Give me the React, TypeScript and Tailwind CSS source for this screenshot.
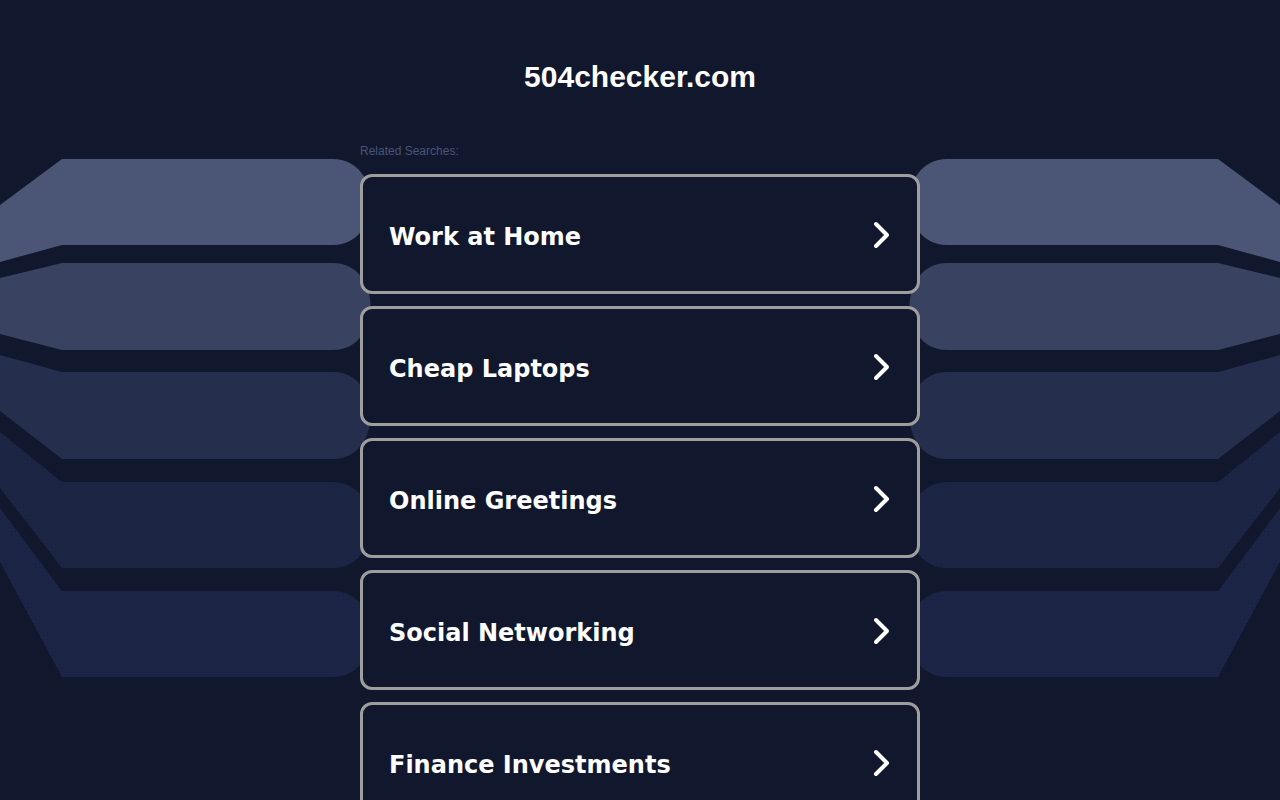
import React from "react";

const bands = [
  { top: 159, bottom: 245, lt: 205, lb: 262, fill: "#4b5575", dots: false },
  { top: 263, bottom: 350, lt: 278, lb: 334, fill: "#3a4262", dots: false },
  { top: 372, bottom: 459, lt: 355, lb: 411, fill: "#262e4d", dots: false },
  { top: 482, bottom: 568, lt: 432, lb: 488, fill: "#1c2444", dots: true },
  { top: 591, bottom: 677, lt: 508, lb: 562, fill: "#1b2445", dots: true },
];

function bandPath(b: (typeof bands)[number]) {
  const fx = 62;
  const ex = 333;
  return `M0,${b.lt} L${fx},${b.top} L${ex},${b.top} C383,${b.top} 383,${b.bottom} ${ex},${b.bottom} L${fx},${b.bottom} L0,${b.lb} Z`;
}

function Ribbons() {
  const side = (
    <>
      {bands.map((b, i) => (
        <g key={i}>
          <path d={bandPath(b)} fill={b.fill} />
          {b.dots && <path d={bandPath(b)} fill="url(#dots)" />}
        </g>
      ))}
    </>
  );
  return (
    <svg
      className="absolute inset-0 pointer-events-none"
      width="1280"
      height="800"
      viewBox="0 0 1280 800"
    >
      <defs>
        <pattern id="dots" width="4" height="4" patternUnits="userSpaceOnUse">
          <rect x="1" y="1" width="1" height="1" fill="#222b4f" />
        </pattern>
      </defs>
      <g>{side}</g>
      <g transform="translate(1280,0) scale(-1,1)">{side}</g>
    </svg>
  );
}

function Chevron() {
  return (
    <svg width="24" height="32" viewBox="0 0 24 32" className="shrink-0 mt-[2px]">
      <polyline
        points="6,5 17,16 6,27"
        fill="none"
        stroke="#ffffff"
        strokeWidth="4"
        strokeLinecap="round"
        strokeLinejoin="round"
      />
    </svg>
  );
}

const items = [
  "Work at Home",
  "Cheap Laptops",
  "Online Greetings",
  "Social Networking",
  "Finance Investments",
];

export default function App() {
  return (
    <div className="relative w-full h-[800px] overflow-hidden bg-[#11172d]">
      <Ribbons />
      <div className="relative flex flex-col items-center pt-[59px]">
        <h1 className="text-[30px] leading-[36px] font-bold text-white [font-family:'Liberation_Sans',Arial,sans-serif]">
          504checker.com
        </h1>
        <div className="w-[560px] mt-[49px]">
          <div className="text-[12px] leading-[14px] text-[#4a5577] [font-family:'Liberation_Sans',Arial,sans-serif]">
            Related Searches:
          </div>
          <div className="mt-[16px] flex flex-col gap-[12px]">
            {items.map((t) => (
              <div
                key={t}
                className="h-[120px] flex items-center justify-between bg-[#11172d] border-[3px] border-[#9e9e9e] rounded-[12px] pl-[26px] pr-[23px]"
              >
                <span className="pt-[5px] text-[24px] font-bold text-white [font-family:'DejaVu_Sans',Verdana,sans-serif]">
                  {t}
                </span>
                <Chevron />
              </div>
            ))}
          </div>
        </div>
      </div>
    </div>
  );
}
